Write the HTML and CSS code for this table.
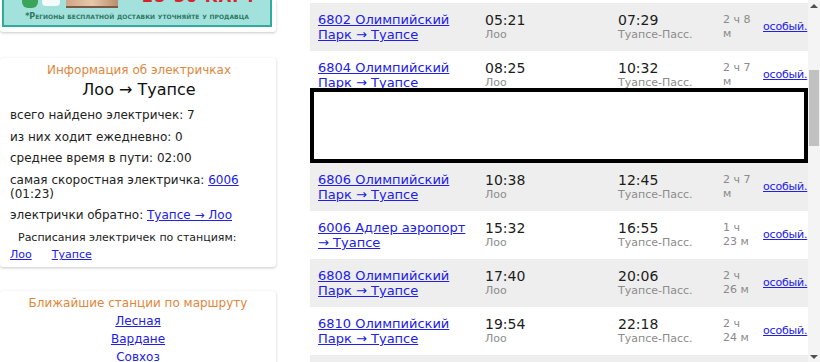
FILE: index.html
```html
<!DOCTYPE html>
<html lang="ru">
<head>
<meta charset="utf-8">
<title>Лоо → Туапсе</title>
<link rel="stylesheet" href="styles.css">
</head>
<body>
<div class="page">
  <aside class="side">
    <div class="card card-ad">
      <div class="banner">
        <div class="banner-top">
          <span class="pack"></span><span class="pack-white"></span><span class="photo"></span>
          <span class="promo">25-30 КАРТ</span>
        </div>
        <div class="banner-note">*Регионы бесплатной доставки уточняйте у продавца</div>
      </div>
    </div>

    <div class="card card-info">
      <div class="card-title">Информация об электричках</div>
      <div class="route">Лоо → Туапсе</div>
      <ul class="facts">
        <li>всего найдено электричек: 7</li>
        <li>из них ходит ежедневно: 0</li>
        <li>среднее время в пути: 02:00</li>
        <li>самая скоростная электричка: <a href="#">6006</a> (01:23)</li>
        <li>электрички обратно: <a href="#">Туапсе → Лоо</a></li>
      </ul>
      <div class="stations-label">Расписания электричек по станциям:</div>
      <div class="stations"><a href="#">Лоо</a><a href="#">Туапсе</a></div>
    </div>

    <div class="card card-near">
      <div class="card-title">Ближайшие станции по маршруту</div>
      <a href="#">Лесная</a>
      <a href="#">Вардане</a>
      <a href="#">Совхоз</a>
    </div>
  </aside>

  <main class="schedule">
    <div class="row-cut"></div>

    <div class="row gray">
      <div class="c-train"><a href="#">6802 Олимпийский Парк → Туапсе</a></div>
      <div class="c-time"><div class="t">05:21</div><div class="st">Лоо</div></div>
      <div class="c-time2"><div class="t">07:29</div><div class="st">Туапсе-Пасс.</div></div>
      <div class="c-dur">2 ч 8 м</div>
      <div class="c-days"><a href="#">особый.</a></div>
    </div>

    <div class="row white row-under">
      <div class="c-train"><a href="#">6804 Олимпийский Парк → Туапсе</a></div>
      <div class="c-time"><div class="t">08:25</div><div class="st">Лоо</div></div>
      <div class="c-time2"><div class="t">10:32</div><div class="st">Туапсе-Пасс.</div></div>
      <div class="c-dur">2 ч 7 м</div>
      <div class="c-days"><a href="#">особый.</a></div>
    </div>

    <div class="adbox"></div>

    <div class="row gray">
      <div class="c-train"><a href="#">6806 Олимпийский Парк → Туапсе</a></div>
      <div class="c-time"><div class="t">10:38</div><div class="st">Лоо</div></div>
      <div class="c-time2"><div class="t">12:45</div><div class="st">Туапсе-Пасс.</div></div>
      <div class="c-dur">2 ч 7 м</div>
      <div class="c-days"><a href="#">особый.</a></div>
    </div>

    <div class="row white">
      <div class="c-train"><a href="#">6006 Адлер аэропорт → Туапсе</a></div>
      <div class="c-time"><div class="t">15:32</div><div class="st">Лоо</div></div>
      <div class="c-time2"><div class="t">16:55</div><div class="st">Туапсе-Пасс.</div></div>
      <div class="c-dur">1 ч 23 м</div>
      <div class="c-days"><a href="#">особый.</a></div>
    </div>

    <div class="row gray">
      <div class="c-train"><a href="#">6808 Олимпийский Парк → Туапсе</a></div>
      <div class="c-time"><div class="t">17:40</div><div class="st">Лоо</div></div>
      <div class="c-time2"><div class="t">20:06</div><div class="st">Туапсе-Пасс.</div></div>
      <div class="c-dur">2 ч 26 м</div>
      <div class="c-days"><a href="#">особый.</a></div>
    </div>

    <div class="row white">
      <div class="c-train"><a href="#">6810 Олимпийский Парк → Туапсе</a></div>
      <div class="c-time"><div class="t">19:54</div><div class="st">Лоо</div></div>
      <div class="c-time2"><div class="t">22:18</div><div class="st">Туапсе-Пасс.</div></div>
      <div class="c-dur">2 ч 24 м</div>
      <div class="c-days"><a href="#">особый.</a></div>
    </div>

    <div class="row gray row-tail"></div>
  </main>

  <div class="scrollbar">
    <div class="sb-arrow">
      <svg width="8" height="5" viewBox="0 0 8 5"><path d="M0 5 L4 1 L8 5 Z" fill="#505050"/></svg>
    </div>
    <div class="sb-track"><div class="sb-thumb"></div></div>
    <div class="sb-arrow">
      <svg width="8" height="5" viewBox="0 0 8 5"><path d="M0 0 L4 4 L8 0 Z" fill="#505050"/></svg>
    </div>
  </div>
</div>
</body>
</html>
```

FILE: styles.css
```css
* { box-sizing: border-box; }

html, body {
  margin: 0;
  padding: 0;
  background: #ffffff;
  font-family: "DejaVu Sans", Verdana, sans-serif;
  color: #222;
}

a { color: #2020e8; }

.page {
  display: flex;
  width: 820px;
  height: 362px;
  overflow: hidden;
}

/* ---------- left column ---------- */
.side {
  width: 310px;
  flex: none;
  display: flex;
  flex-direction: column;
  padding-right: 34px;
}

.card {
  flex: none;
  background: #fff;
  border-radius: 3px;
  box-shadow: 0 1px 3px rgba(0, 0, 0, 0.22);
}

.card-ad {
  padding: 0 4px 4px 2px;
  height: 32px;
  border-radius: 0 0 3px 3px;
}

.banner {
  height: 27px;
  background: #a3e1dc;
  border: 2px solid #2fac9d;
  border-top: none;
  overflow: hidden;
  display: flex;
  flex-direction: column;
}

.banner-top {
  height: 8px;
  flex: none;
  display: flex;
  align-items: flex-start;
  overflow: hidden;
  padding-left: 18px;
}

.banner-top > span { flex: none; }

.pack {
  width: 16px;
  height: 8px;
  background: #3aa55a;
  border-radius: 0 0 6px 6px;
}

.pack-white {
  width: 18px;
  height: 6px;
  margin-left: 4px;
  background: #f4fbfa;
  border-radius: 0 0 4px 4px;
}

.photo {
  width: 52px;
  height: 8px;
  margin-left: 6px;
  background: linear-gradient(90deg, #cfa687, #e8c8aa 50%, #b98e6c);
  border-bottom: 2px solid #7a5a45;
}

.promo {
  margin-left: 24px;
  margin-top: -11px;
  font-size: 16px;
  line-height: 16px;
  font-weight: bold;
  color: #d8232a;
  letter-spacing: 1px;
  white-space: nowrap;
}

.banner-note {
  flex: 1;
  display: flex;
  align-items: center;
  justify-content: center;
  font-size: 8px;
  font-weight: bold;
  font-variant: small-caps;
  color: #2d7863;
  white-space: nowrap;
  padding-bottom: 1px;
}

.card-info {
  margin-top: 26px;
  height: 209px;
  padding: 5px 8px 0 10px;
}

.card-title {
  text-align: center;
  color: #e0873b;
  font-size: 12px;
  line-height: 14px;
}

.route {
  text-align: center;
  font-size: 16px;
  line-height: 20px;
  margin-top: 3px;
  color: #111;
}

.facts {
  list-style: none;
  margin: 8px 0 0;
  padding: 0;
  display: flex;
  flex-direction: column;
  gap: 7.6px;
  font-size: 12px;
  line-height: 14px;
}

.stations-label {
  font-size: 11px;
  line-height: 14px;
  margin: 9px 0 0 8px;
}

.stations {
  display: flex;
  gap: 20px;
  font-size: 11px;
  line-height: 14px;
  margin-top: 3px;
}

.card-near {
  margin-top: 24px;
  height: 90px;
  padding-top: 4px;
  display: flex;
  flex-direction: column;
  align-items: center;
  font-size: 12px;
  line-height: 18px;
}

.card-near .card-title {
  line-height: 16px;
  margin-bottom: 1px;
}

/* ---------- schedule ---------- */
.schedule {
  width: 498px;
  flex: none;
  display: flex;
  flex-direction: column;
}

.row-cut {
  height: 3px;
  background: #fff;
  flex: none;
}

.row {
  height: 48px;
  flex: none;
  display: grid;
  grid-template-columns: 175px 133px 105px 40px 45px;
  align-items: center;
}

.row.gray { background: #eeeeee; }
.row.white { background: #ffffff; }

.row-under { margin-bottom: -11px; }

.c-train {
  padding: 0 17px 0 8px;
  font-size: 13px;
  line-height: 15px;
}

.c-time .t,
.c-time2 .t {
  font-size: 14px;
  line-height: 16px;
  color: #1c1c1c;
}

.c-time .st,
.c-time2 .st {
  font-size: 11px;
  line-height: 14px;
  color: #8c8c8c;
}

.c-dur {
  font-size: 11px;
  line-height: 14px;
  color: #8a8a8a;
  padding-right: 9px;
}

.c-days {
  font-size: 11px;
  line-height: 14px;
  letter-spacing: -0.2px;
}

.adbox {
  position: relative;
  height: 75px;
  flex: none;
  background: #fff;
  border: 4px solid #000;
}

.row-tail { height: 20px; }

/* ---------- fake scrollbar ---------- */
.scrollbar {
  width: 12px;
  flex: none;
  background: #f4f4f4;
  display: flex;
  flex-direction: column;
}

.sb-arrow {
  height: 10px;
  flex: none;
  display: flex;
  align-items: center;
  justify-content: center;
}

.sb-track {
  flex: 1;
  padding-top: 60px;
}

.sb-thumb {
  width: 10px;
  margin-left: 1px;
  height: 76px;
  background: #c1c1c1;
}
```
